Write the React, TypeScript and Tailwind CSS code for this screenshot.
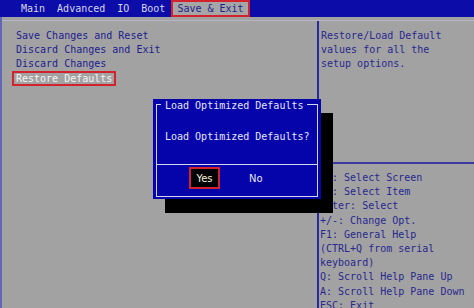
import React from "react";

const mono = { fontFamily: '"DejaVu Sans Mono", "Liberation Mono", monospace' };

const tabs = ["Main", "Advanced", "IO", "Boot", "Save & Exit"];
const menu = ["Save Changes and Reset", "Discard Changes and Exit", "Discard Changes"];
const help = [
  "\u2192\u2190: Select Screen",
  "\u2191\u2193: Select Item",
  "Enter: Select",
  "+/-: Change Opt.",
  "F1: General Help",
  "(CTRL+Q from serial",
  "keyboard)",
  "Q: Scroll Help Pane Up",
  "A: Scroll Help Pane Down",
  "ESC: Exit",
];

export default function App() {
  return (
    <div
      className="relative w-[474px] h-[308px] overflow-hidden bg-[#a2a2a2] flex flex-col text-[10px]"
      style={mono}
    >
      {/* top menu bar */}
      <div className="h-[17px] shrink-0 bg-[#0c0ca8] flex pl-[15px]">
        {tabs.map((t) => (
          <div
            key={t}
            className={
              t === "Save & Exit"
                ? "px-[6px] leading-[17px] whitespace-pre bg-[#a6a6a6] text-[#1e1e8e] shadow-[inset_0_0_0_2px_#d2232d]"
                : "px-[6px] leading-[17px] whitespace-pre text-[#d6d6e6]"
            }
          >
            {t}
          </div>
        ))}
      </div>

      {/* body frame */}
      <div className="flex-1 flex flex-col border-l-2 border-b-[3px] border-[#6464b8]">
        <div className="h-[3px] shrink-0" />
        <div className="h-px shrink-0 bg-[#b6b6c2]" />
        <div className="flex-1 flex min-h-0">
          {/* left panel */}
          <div className="w-[315px] pt-[8px] pl-[14px] text-[#20208f]">
            {menu.map((m) => (
              <div key={m} className="h-[14.2px] leading-[14.2px] whitespace-pre">
                {m}
              </div>
            ))}
            <div className="h-[14.2px] flex items-center">
              <span className="-ml-[4px] px-[4px] h-[15px] leading-[15px] whitespace-pre text-[#f6f6f6] shadow-[inset_0_0_0_2px_#d2232d]">
                Restore Defaults
              </span>
            </div>
          </div>
          {/* divider */}
          <div className="w-[2px] bg-[#2a2a9c]" />
          {/* right panel */}
          <div className="flex-1 overflow-hidden pt-[8px] text-[#28288f]">
            <div className="pl-[2px]">
              {["Restore/Load Default", "values for all the", "setup options."].map((l) => (
                <div key={l} className="h-[14.2px] leading-[14.2px] whitespace-pre">
                  {l}
                </div>
              ))}
            </div>
            <div className="mt-[90px] h-[2px] bg-[#3a3aa0]" />
            <div className="mt-[7.5px] pl-[1px]">
              {help.map((l) => (
                <div key={l} className="h-[14.2px] leading-[14.2px] whitespace-pre">
                  {l}
                </div>
              ))}
            </div>
          </div>
        </div>
      </div>

      {/* dialog */}
      <div className="absolute left-[153px] top-[99px] w-[168px] h-[100px] bg-[#0404aa] shadow-[12px_14px_0_0_#000] pt-[5px] px-[3px] pb-[2px] flex flex-col">
        <div className="flex-1 flex flex-col border-l border-r border-b border-[#d4d4f0] text-[#e4e4ee]">
          <div className="h-px flex items-start">
            <div className="w-[4px] h-px bg-[#d4d4f0]" />
            <div className="px-[4px] -mt-[5px] leading-[14px] whitespace-pre">Load Optimized Defaults</div>
            <div className="flex-1 h-px bg-[#d4d4f0]" />
          </div>
          <div className="h-[59px] flex items-center pl-[8px] pt-[3px] whitespace-pre">
            Load Optimized Defaults?
          </div>
          <div className="flex-1 border-t border-[#d4d4f0] flex items-start pt-[2px] pl-[32px]" style={{ fontFamily: '"DejaVu Sans", sans-serif' }}>
            <div className="w-[31px] h-[22px] bg-black flex items-center justify-center text-[#f4f4dc] shadow-[inset_0_0_0_2px_#d2232d]">
              Yes
            </div>
            <div className="ml-[29px] h-[22px] flex items-center text-[#e4e4ee]">No</div>
          </div>
        </div>
      </div>
    </div>
  );
}
